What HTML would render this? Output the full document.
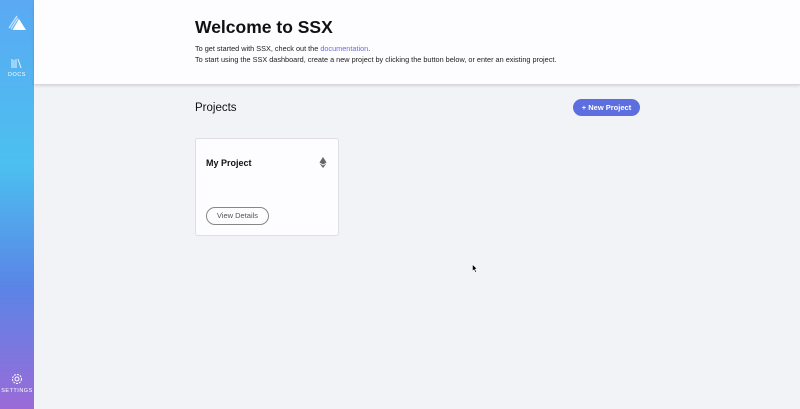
<!DOCTYPE html>
<html><head><style>
*{margin:0;padding:0;box-sizing:border-box}
body{width:800px;height:409px;overflow:hidden;background:#f2f3f7;font-family:"Liberation Sans",sans-serif;position:relative}
.side{position:absolute;left:0;top:0;width:34px;height:409px;background:linear-gradient(180deg,#5aa9f2 0%,#4cc0f0 40%,#5a85e6 70%,#9b6ad8 100%)}
.hdr{position:absolute;left:34px;top:0;right:0;height:85px;background:#fdfcfe;border-bottom:1px solid #d8d8dc;box-shadow:0 1px 3px rgba(0,0,0,.12)}
h1{position:absolute;left:195px;top:17px;font-size:17.5px;font-weight:bold;color:#111}
.p{position:absolute;left:195px;font-size:7.3px;color:#222}
.card{position:absolute;left:195px;top:138px;width:144px;height:98px;background:#fdfcfe;border:1px solid #dedee3;border-radius:3px}
.btn{position:absolute;left:573px;top:99px;width:67px;height:17px;border-radius:9px;background:#5c6ee0;color:#fff;font-size:7.5px;font-weight:bold;text-align:center;line-height:17px}
</style></head><body>
<div class="side">
<svg style="position:absolute;left:7px;top:14px" width="20" height="18" viewBox="0 0 20 18"><path d="M12 5 L19 16 L6 16 Z" fill="#fff"/><path d="M2 14 L10 2 M4 15 L11 4 M6 16 L12 6" stroke="#fff" stroke-width="1.2" opacity=".7"/></svg>
<svg style="position:absolute;left:11px;top:58px" width="12" height="10" viewBox="0 0 12 10"><path d="M1 1v9M3 2v8M5 1v9M7 1l3 9" stroke="#fff" stroke-width="1" fill="none" opacity=".85"/></svg>
<div style="position:absolute;left:0;width:34px;top:72px;text-align:center;font-size:5.5px;color:#fff;letter-spacing:.5px">DOCS</div>
<svg style="position:absolute;left:11px;top:373px" width="12" height="12" viewBox="0 0 12 12"><circle cx="6" cy="6" r="4.5" stroke="#fff" fill="none" stroke-dasharray="2 1"/><circle cx="6" cy="6" r="2" stroke="#fff" fill="none"/></svg>
<div style="position:absolute;left:0;width:34px;top:388px;text-align:center;font-size:5.5px;color:#fff;letter-spacing:.5px">SETTINGS</div>
</div>
<div class="hdr"></div>
<h1>Welcome to SSX</h1>
<div class="p" style="top:44px">To get started with SSX, check out the <span style="color:#6f6cdc">documentation</span>.</div>
<div class="p" style="top:55px">To start using the SSX dashboard, create a new project by clicking the button below, or enter an existing project.</div>
<div style="position:absolute;left:195px;top:102px;font-size:11.5px;color:#111">Projects</div>
<div class="btn">+ New Project</div>
<div class="card">
<div style="position:absolute;left:10px;top:19px;font-size:9px;font-weight:bold;color:#111">My Project</div>
<svg style="position:absolute;left:123px;top:18px" width="8" height="11" viewBox="0 0 8 11"><path d="M4 0 L7.5 5.5 L4 7.5 L0.5 5.5Z M0.5 6.5 L4 8.5 L7.5 6.5 L4 11Z" fill="#666"/></svg>
<div style="position:absolute;left:10px;top:68px;width:63px;height:18px;border:1px solid #888;border-radius:9px;font-size:7.5px;color:#555;text-align:center;line-height:16px">View Details</div>
</div>
<svg style="position:absolute;left:472px;top:264px" width="6" height="9" viewBox="0 0 6 9"><path d="M0.5 0.5 L0.5 7 L2 5.5 L3.5 8.5 L4.5 8 L3 5 L5 5Z" fill="#000" stroke="#fff" stroke-width=".5"/></svg>
</body></html>
